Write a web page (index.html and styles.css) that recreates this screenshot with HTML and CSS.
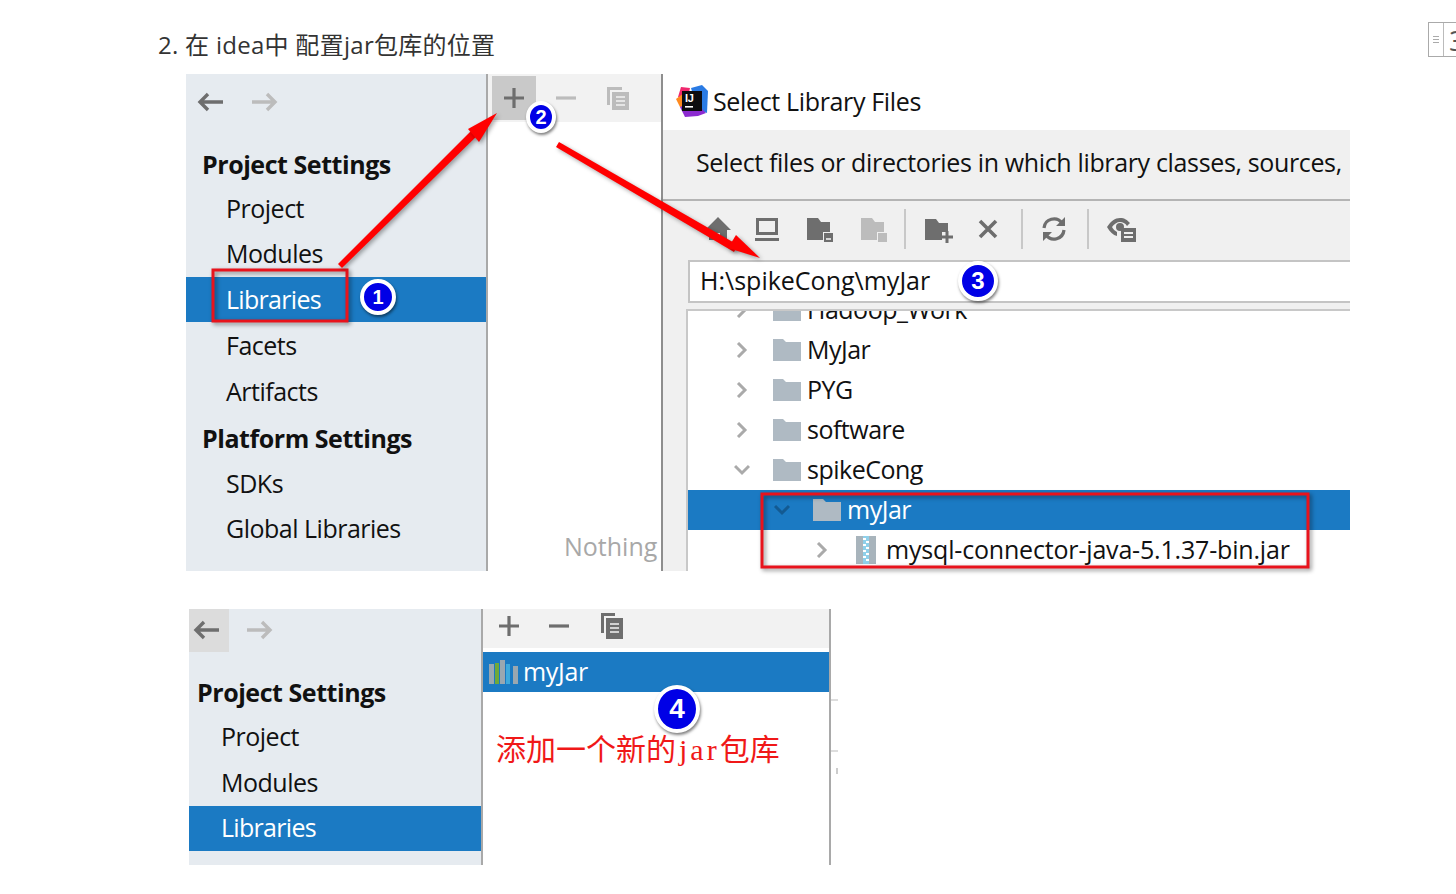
FILE: index.html
```html
<!DOCTYPE html>
<html lang="zh">
<head>
<meta charset="utf-8">
<title>在 idea中 配置jar包库的位置</title>
<link rel="stylesheet" href="styles.css">
</head>
<body>
<main class="article">
  <p class="step">2. 在 idea中 配置jar包库的位置</p>

  <figure class="shot shot-one">
    <nav class="sidebar">
      <div class="history">
        <svg class="nav-icon" viewBox="0 0 28 24"><path d="M27 12H5M12 4l-8 8 8 8" fill="none" stroke="#6e6e6e" stroke-width="3.4"/></svg>
        <svg class="nav-icon" viewBox="0 0 28 24"><path d="M1 12h22M16 4l8 8-8 8" fill="none" stroke="#bcbcbc" stroke-width="3.4"/></svg>
      </div>
      <div class="row head">Project Settings</div>
      <div class="row">Project</div>
      <div class="row">Modules</div>
      <div class="row selected">Libraries</div>
      <div class="row after-selected">Facets</div>
      <div class="row">Artifacts</div>
      <div class="row head platform">Platform Settings</div>
      <div class="row">SDKs</div>
      <div class="row">Global Libraries</div>
    </nav>

    <section class="middle">
      <div class="tools">
        <span class="tool hovered"><svg viewBox="0 0 24 24"><path d="M12 2v20M2 12h20" stroke="#6e6e6e" stroke-width="3.2"/></svg></span>
        <span class="tool"><svg viewBox="0 0 24 24"><path d="M2 12h20" stroke="#bcbcbc" stroke-width="3.2"/></svg></span>
        <span class="tool"><svg viewBox="0 0 24 24"><path d="M1 1h15v3H4v15H1z" fill="#bcbcbc"/><path d="M6 6h17v19H6z" fill="#bcbcbc"/><path d="M10 11h9M10 15h9M10 19h9" stroke="#f2f2f2" stroke-width="1.6"/></svg></span>
      </div>
      <div class="nothing">Nothing</div>
    </section>

    <section class="dialog">
      <header class="title-bar">
        <svg class="logo" viewBox="0 0 32 32">
          <path d="M5 2l9 1-3 13-9-4z" fill="#f0286e"/>
          <path d="M0 14l8-6 6 16-10-2z" fill="#ff8a1f"/>
          <path d="M15 3l11-3 6 6-1 22-10-4z" fill="#2a7be4"/>
          <path d="M4 22l14-6 12 12-8 3-13 1z" fill="#8c2bd0"/>
          <rect x="6" y="6" width="20" height="20" fill="#0c0c0f"/>
          <rect x="9" y="21" width="8" height="1.6" fill="#fff"/>
          <text x="9" y="17" class="logo-text">IJ</text>
        </svg>
        <span>Select Library Files</span>
      </header>
      <div class="dialog-body">
        <p class="prompt">Select files or directories in which library classes, sources,</p>
        <div class="file-tools">
          <svg class="ft" viewBox="0 0 32 32"><path d="M16 4L3 17h4v10h7v-7h4v7h7V17h4z" fill="#6e6e6e"/></svg>
          <svg class="ft shift-l" viewBox="0 0 32 32"><path d="M5 5h22v17H5zM8 8v11h16V8zM4 25h24v3H4z" fill="#6e6e6e" fill-rule="evenodd"/></svg>
          <svg class="ft shift-s" viewBox="0 0 32 32"><path d="M3 5h11l3 4h9v10h-7v8H3z" fill="#6e6e6e"/><path d="M20 20h9v9h-9z" fill="#6e6e6e"/><path d="M22 26h5" stroke="#f0f0f0" stroke-width="1.6"/></svg>
          <svg class="ft" viewBox="0 0 32 32"><path d="M3 5h11l3 4h9v10h-7v8H3z" fill="#bcbcbc"/><path d="M20 20h9v9h-9z" fill="#bcbcbc"/></svg>
          <i class="sep sep-first"></i>
          <svg class="ft" viewBox="0 0 32 32"><path d="M2 6h11l3 4h9v9h-6v8H2z" fill="#6e6e6e"/><path d="M24 18v12M18 24h12" stroke="#6e6e6e" stroke-width="3"/></svg>
          <svg class="ft ft-close" viewBox="0 0 32 32"><path d="M8 8l16 16M24 8L8 24" stroke="#6e6e6e" stroke-width="3.6"/></svg>
          <i class="sep sep-second"></i>
          <svg class="ft" viewBox="0 0 32 32"><path d="M6 15a10 10 0 0 1 18-5M26 17a10 10 0 0 1-18 5" fill="none" stroke="#6e6e6e" stroke-width="3.2"/><path d="M27 4v9h-9zM5 28v-9h9z" fill="#6e6e6e"/></svg>
          <i class="sep"></i>
          <svg class="ft" viewBox="0 0 32 32"><path d="M1 14c4-6 8-9 13-9s7 2 10 5l-3 3c-2-3-4-4-7-4s-6 2-8 5c1 2 3 4 5 5v4C7 22 4 19 1 14z" fill="#6e6e6e"/><circle cx="14" cy="14" r="4" fill="#6e6e6e"/><path d="M15 15h15v14H15z" fill="#6e6e6e"/><path d="M18 20h9M18 24h9" stroke="#f0f0f0" stroke-width="1.8"/></svg>
        </div>
        <div class="path-field">H:\spikeCong\myJar</div>
        <div class="tree">
          <div class="node clipped">
            <svg class="chev" viewBox="0 0 16 16"><path d="M4 1l7 7-7 7" fill="none" stroke="#aaa" stroke-width="3"/></svg>
            <svg class="folder" viewBox="0 0 28 22"><path d="M0 0h10l3 3h15v19H0z" fill="#afbac3"/></svg>
            <span>Hadoop_Work</span>
          </div>
          <div class="node">
            <svg class="chev" viewBox="0 0 16 16"><path d="M4 1l7 7-7 7" fill="none" stroke="#aaa" stroke-width="3"/></svg>
            <svg class="folder" viewBox="0 0 28 22"><path d="M0 0h10l3 3h15v19H0z" fill="#afbac3"/></svg>
            <span>MyJar</span>
          </div>
          <div class="node">
            <svg class="chev" viewBox="0 0 16 16"><path d="M4 1l7 7-7 7" fill="none" stroke="#aaa" stroke-width="3"/></svg>
            <svg class="folder" viewBox="0 0 28 22"><path d="M0 0h10l3 3h15v19H0z" fill="#afbac3"/></svg>
            <span>PYG</span>
          </div>
          <div class="node">
            <svg class="chev" viewBox="0 0 16 16"><path d="M4 1l7 7-7 7" fill="none" stroke="#aaa" stroke-width="3"/></svg>
            <svg class="folder" viewBox="0 0 28 22"><path d="M0 0h10l3 3h15v19H0z" fill="#afbac3"/></svg>
            <span>software</span>
          </div>
          <div class="node">
            <svg class="chev" viewBox="0 0 16 16"><path d="M1 4l7 7 7-7" fill="none" stroke="#aaa" stroke-width="3"/></svg>
            <svg class="folder" viewBox="0 0 28 22"><path d="M0 0h10l3 3h15v19H0z" fill="#afbac3"/></svg>
            <span>spikeCong</span>
          </div>
          <div class="node level-two active">
            <svg class="chev" viewBox="0 0 16 16"><path d="M1 4l7 7 7-7" fill="none" stroke="#135a92" stroke-width="3"/></svg>
            <svg class="folder" viewBox="0 0 28 22"><path d="M0 0h10l3 3h15v19H0z" fill="#afbac3"/></svg>
            <span>myJar</span>
          </div>
          <div class="node level-three">
            <svg class="chev" viewBox="0 0 16 16"><path d="M4 1l7 7-7 7" fill="none" stroke="#aaa" stroke-width="3"/></svg>
            <svg class="jar" viewBox="0 0 20 28"><path d="M0 0h20v28H0z" fill="#a8b4bc"/><path d="M7 0h6v28H7z" fill="#8fd0ea"/><path d="M7 2h3v2H7zM10 5h3v2h-3zM7 8h3v2H7zM10 11h3v2h-3zM7 14h3v2H7zM10 17h3v2h-3zM7 20h3v2H7zM10 23h3v2h-3z" fill="#fff"/></svg>
            <span>mysql-connector-java-5.1.37-bin.jar</span>
          </div>
        </div>
      </div>
    </section>

    <svg class="marks" viewBox="0 0 1164 497">
      <rect class="box" x="27" y="196" width="134" height="51"/>
      <rect class="box" x="576" y="420" width="546" height="73"/>
      <path class="arrow" d="M152 190l4 4L297 56l-5-6z"/>
      <path class="arrow" d="M311 39l-29 16 11 13z"/>
      <path class="arrow" d="M373 68l-3 5 178 105 4-7z"/>
      <path class="arrow" d="M574 184l-32-10 8-13z"/>
    </svg>
    <span class="badge badge-one">1</span>
    <span class="badge badge-two">2</span>
    <span class="badge badge-three">3</span>
  </figure>

  <figure class="shot shot-two">
    <nav class="sidebar narrow">
      <div class="history compact">
        <span class="back-hover"><svg class="nav-icon" viewBox="0 0 28 24"><path d="M27 12H5M12 4l-8 8 8 8" fill="none" stroke="#6e6e6e" stroke-width="3.4"/></svg></span>
        <svg class="nav-icon" viewBox="0 0 28 24"><path d="M1 12h22M16 4l8 8-8 8" fill="none" stroke="#bcbcbc" stroke-width="3.4"/></svg>
      </div>
      <div class="row head tight">Project Settings</div>
      <div class="row tight raised">Project</div>
      <div class="row tight">Modules</div>
      <div class="row selected tight raised">Libraries</div>
      <div class="row tight peek">Facets</div>
    </nav>
    <section class="lib-panel">
      <div class="lib-tools">
        <svg class="lt" viewBox="0 0 24 24"><path d="M12 2v20M2 12h20" stroke="#6e6e6e" stroke-width="3.2"/></svg>
        <svg class="lt" viewBox="0 0 24 24"><path d="M2 12h20" stroke="#6e6e6e" stroke-width="3.2"/></svg>
        <svg class="lt" viewBox="0 0 24 28"><path d="M1 1h14v3H4v17H1z" fill="#6e6e6e"/><path d="M6 6h17v21H6z" fill="#6e6e6e"/><path d="M10 12h9M10 16h9M10 20h9" stroke="#f2f2f2" stroke-width="1.6"/></svg>
      </div>
      <div class="lib-row">
        <svg class="lib-icon" viewBox="0 0 29 24"><path d="M0 4h5v20H0z" fill="#9aa7b0"/><path d="M6 3h4v21H6z" fill="#6fa83a"/><path d="M11 0h5v24h-5z" fill="#9aa7b0"/><path d="M17 4h4v20h-4z" fill="#3fa9dc"/><path d="M24 6h5v18h-5z" fill="#9aa7b0"/></svg>
        <span>myJar</span>
      </div>
      <p class="note">添加一个新的<span class="note-latin">jar</span>包库</p>
      <span class="badge badge-four">4</span>
    </section>
    <aside class="lib-edge">
      <i class="edge-line"></i>
      <i class="edge-line"></i>
      <i class="edge-tick"></i>
    </aside>
  </figure>
</main>

<aside class="toc-toggle">
  <span class="toc-lines"><i></i><i></i><i></i></span>
  <span class="toc-num">3</span>
</aside>
</body>
</html>
```
FILE: styles.css
```css
* { box-sizing: border-box; }
html, body { margin: 0; height: 100%; overflow: hidden; background: #fff; }
body {
  position: relative;
  font-family: "Open Sans", "Noto Sans CJK SC", sans-serif;
  color: #111;
}
.article { padding: 28px 0 0 158px; }
.step {
  margin: 0;
  height: 46px;
  font-size: 24px;
  line-height: 34px;
  color: #333;
  letter-spacing: 0.28px;
}
.shot { position: relative; margin: 0; display: flex; }
.shot-one { width: 1164px; height: 497px; margin-left: 28px; }
.shot-two { width: 649px; height: 256px; margin: 38px 0 0 31px; overflow: hidden; }

.sidebar {
  width: 300px;
  flex: none;
  background: #e6ebf0;
  font-size: 25px;
}
.sidebar.narrow { width: 292px; }
.history { height: 68px; display: flex; gap: 27px; padding: 16px 0 0 10px; }
.history.compact { height: 61px; padding: 0; gap: 17px; align-items: flex-start; }
.nav-icon { width: 28px; height: 24px; flex: none; }
.compact > .nav-icon { margin-top: 9px; }
.back-hover {
  width: 40px; height: 43px;
  background: #dcdcdc;
  display: flex; align-items: center; justify-content: center;
  padding: 0 6px 2px 0;
}
.row {
  height: 45.5px;
  line-height: 44px;
  padding-left: 40px;
  white-space: nowrap;
  letter-spacing: -0.5px;
}
.row.head { height: 43.5px; padding-left: 16px; font-weight: 700; letter-spacing: -0.45px; }
.row.platform { margin-top: 2px; height: 44.5px; }
.row.after-selected { margin-top: 1px; }
.row.selected { background: #1b7ac3; color: #fff; letter-spacing: -0.7px; }
.row.tight { padding-left: 32px; }
.row.head.tight { padding-left: 8px; height: 44.5px; }
.row.raised { line-height: 42px; }
.row.peek { line-height: 44px; }

.middle {
  width: 177px;
  flex: none;
  display: flex;
  flex-direction: column;
  overflow: hidden;
  background: #fff;
  border-left: 2px solid #a9a9a9;
  border-right: 2px solid #8e8e8e;
}
.tools { height: 48px; flex: none; background: #f2f2f2; display: flex; padding: 2px 0 0 4px; }
.tool { width: 44px; height: 44px; display: flex; align-items: center; justify-content: center; flex: none; }
.tool svg { width: 24px; height: 24px; }
.tool.hovered { background: #c9c9c9; }
.tool + .tool { margin-left: 8px; }
.nothing {
  margin-top: auto;
  padding: 0 0 7px 76px;
  font-size: 25px;
  line-height: 36px;
  color: #a8a8a8;
  white-space: nowrap;
}

.dialog { flex: 1; display: flex; flex-direction: column; min-width: 0; }
.title-bar {
  height: 56px;
  flex: none;
  display: flex;
  align-items: center;
  gap: 5px;
  padding: 0 0 3px 13px;
  font-size: 25px;
  letter-spacing: -0.35px;
  background: #fff;
}
.logo { width: 32px; height: 32px; flex: none; }
.logo-text { font: 700 11px "Liberation Sans", sans-serif; fill: #fff; }
.dialog-body { flex: 1; min-height: 0; background: #f0f0f0; display: flex; flex-direction: column; }
.prompt {
  margin: 0;
  height: 71px;
  border-bottom: 2px solid #b4b4b4;
  font-size: 25px;
  line-height: 64px;
  letter-spacing: -0.35px;
  white-space: nowrap;
  overflow: hidden;
  padding-left: 33px;
}
.file-tools { height: 59px; flex: none; display: flex; align-items: center; gap: 20px; padding: 0 0 4px 39px; }
.ft { width: 32px; height: 32px; flex: none; }
.shift-l { margin-left: -3px; margin-right: 3px; }
.shift-s { margin-left: -2px; margin-right: 2px; }
.sep { width: 2px; height: 40px; background: #c8c8c8; flex: none; margin: 0 -3px; }
.sep-first { margin-left: -6px; }
.ft-close { margin-left: -3px; }
.sep-second { margin-right: -5px; }
.path-field {
  height: 43px;
  flex: none;
  margin-left: 25px;
  border: 2px solid #c4c4c4;
  border-right: 0;
  background: #fff;
  padding-left: 10px;
  font-size: 25px;
  line-height: 36px;
  white-space: nowrap;
}
.tree {
  flex: 1;
  min-height: 0;
  margin: 6px 0 0 23px;
  background: #fff;
  border-top: 2px solid #c8c8c8;
  border-left: 2px solid #c8c8c8;
  overflow: hidden;
  font-size: 25px;
  letter-spacing: -0.5px;
}
.node {
  height: 40px;
  display: flex;
  align-items: center;
  padding-left: 46px;
  white-space: nowrap;
}
.node span { padding-bottom: 2px; }
.node.clipped { margin-top: -21px; }
.chev { width: 16px; height: 16px; flex: none; margin-right: 23px; }
.folder { width: 28px; height: 22px; flex: none; margin-right: 6px; }
.jar { width: 20px; height: 28px; flex: none; margin-right: 10px; }
.level-two { padding-left: 86px; }
.level-three { padding-left: 126px; letter-spacing: -0.18px; }
.level-three .chev { margin-right: 26px; }
.active { background: #1b7ac3; color: #fff; }

.marks {
  position: absolute;
  inset: 0;
  width: 100%;
  height: 100%;
  pointer-events: none;
  overflow: visible;
}
.box { fill: none; stroke: #e8131c; stroke-width: 3; filter: drop-shadow(2px 2px 2px rgba(0,0,0,.45)); }
.arrow { fill: #f00; filter: drop-shadow(2px 2px 2px rgba(0,0,0,.35)); }

.badge {
  position: absolute;
  border-radius: 50%;
  background: #0000e6;
  border: 4px solid #fff;
  box-shadow: 1px 2px 3px rgba(0,0,0,.5);
  color: #fff;
  font: 700 20px/1 "Liberation Sans", sans-serif;
  display: flex;
  align-items: center;
  justify-content: center;
}
.badge-one { left: 174px; top: 205px; width: 36px; height: 36px; }
.badge-two { left: 340px; top: 27px; width: 30px; height: 32px; }
.badge-three { left: 772px; top: 187px; width: 40px; height: 40px; font-size: 24px; }
.badge-four { left: 171px; top: 76px; width: 46px; height: 48px; font-size: 28px; }

.lib-panel {
  position: relative;
  width: 350px;
  flex: none;
  background: #fff;
  border-left: 2px solid #a9a9a9;
  border-right: 2px solid #a9a9a9;
}
.lib-tools { height: 39px; background: #f2f2f2; display: flex; gap: 26px; padding: 3px 0 0 14px; align-items: flex-start; }
.lt { width: 24px; height: 28px; flex: none; }
.lt:last-child { margin-left: 2px; width: 26px; }
.lib-row {
  height: 40px;
  margin-top: 4px;
  background: #1b7ac3;
  color: #fff;
  display: flex;
  align-items: center;
  gap: 5px;
  padding-left: 6px;
  font-size: 25px;
  letter-spacing: -0.3px;
}
.lib-row span { padding-bottom: 3px; }
.lib-icon { width: 29px; height: 24px; flex: none; }
.note {
  margin: 38px 0 0 13px;
  font: 30px/40px "Liberation Serif", "Noto Sans CJK SC", serif;
  color: #f01818;
  white-space: nowrap;
}
.note-latin { margin-left: 3px; letter-spacing: 3px; }
.lib-edge { flex: 1; background: #fff; padding-top: 90px; }
.edge-line { display: block; height: 2px; background: #ddd; margin-bottom: 49px; }
.edge-line + .edge-line { margin-bottom: 16px; }
.edge-tick { display: block; width: 2px; height: 6px; background: #ccc; margin-left: 5px; }

.toc-toggle {
  position: absolute;
  left: 1428px;
  top: 22px;
  width: 40px;
  height: 35px;
  border: 1px solid #aaa;
  background: #fff;
  display: flex;
  align-items: center;
}
.toc-lines { width: 15px; height: 100%; border-right: 1px solid #bbb; display: flex; flex-direction: column; gap: 2px; justify-content: center; align-items: center; flex: none; }
.toc-lines i { display: block; width: 6px; height: 1px; background: #aaa; }
.toc-num { margin-left: 5px; font-size: 28px; line-height: 1; color: #555; }
```
